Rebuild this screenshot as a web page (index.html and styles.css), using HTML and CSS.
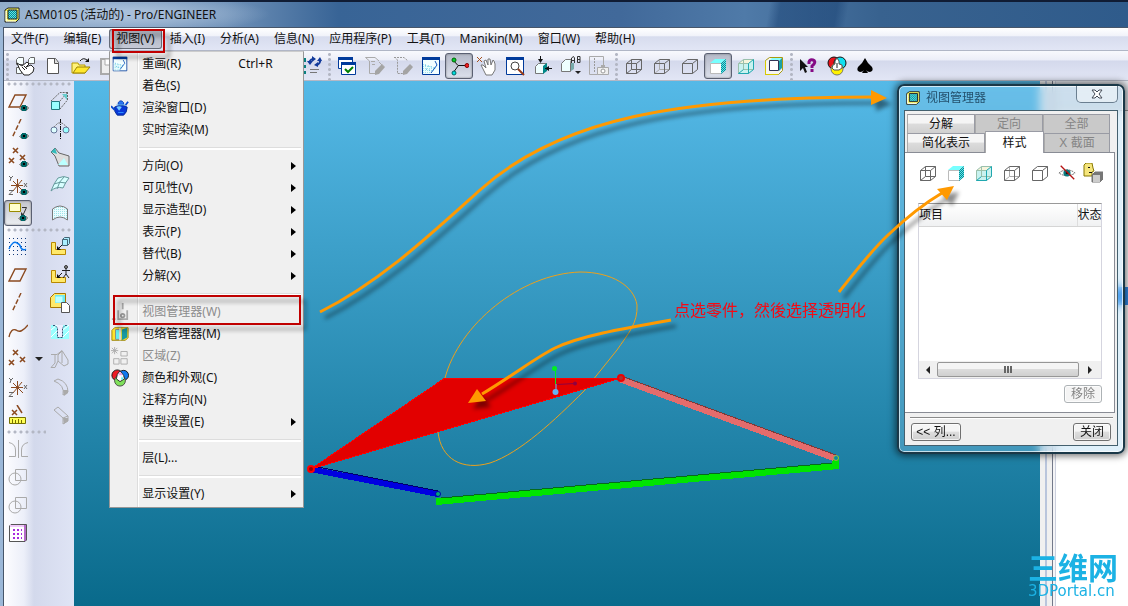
FILE: index.html
```html
<!DOCTYPE html>
<html lang="zh-CN">
<head>
<meta charset="utf-8">
<title>ASM0105 (活动的) - Pro/ENGINEER</title>
<link rel="stylesheet" href="styles.css">
</head>
<body>
<svg class="defs" aria-hidden="true">
  <defs>
    <pattern id="dither" width="2" height="2" patternUnits="userSpaceOnUse"><rect width="2" height="2" fill="#5fe6ea"/><rect width="1" height="1" fill="#0a8a94"/><rect x="1" y="1" width="1" height="1" fill="#0a8a94"/></pattern>
    <pattern id="gold" width="2" height="2" patternUnits="userSpaceOnUse"><rect width="2" height="2" fill="#ff4"/><rect width="1" height="1" fill="#fff8c0"/></pattern>
    <pattern id="pale" width="2" height="2" patternUnits="userSpaceOnUse"><rect width="2" height="2" fill="#eafcff"/><rect width="1" height="1" fill="#9fe4e8"/></pattern>
  </defs>
  <symbol id="app" viewBox="0 0 20 20"><path d="M3 5L6 3H17V14L14 17H3Z" fill="url(#gold)" stroke="#222"/><path d="M6 5H15V14H6Z" fill="url(#dither)" stroke="#222"/><path d="M4 6V16H14" stroke="#fff" fill="none"/></symbol>
  <symbol id="eye" viewBox="0 0 10 8"><path d="M0 4L2 2H8L10 4L8 7H2Z" fill="#999"/><circle cx="5" cy="4" r="3" fill="#066"/><rect x="4" y="3" width="2" height="2" fill="#000"/></symbol>
  <symbol id="models" viewBox="0 0 20 20"><path d="M1.500 3.500L3.500 1.500H8.500V8.500H1.500ZM13.500 3.500L15.500 1.500H19.500V7.500H13.500ZM1.500 11.500H6.500V17.500H1.500Z" fill="#f6ffff" stroke="#666"/><path d="M2 7L7 10L12 6L14 8L11 11L16 9L19 12L18 16L14 19H9L5 14Z" fill="#fff" stroke="#222"/><path d="M7 11L10 14M9 10L12 13" stroke="#222"/></symbol>
  <symbol id="new" viewBox="0 0 20 20"><path d="M4.500 2.500H12.500L15.500 6.500V17.500H4.500Z" fill="#fff" stroke="#555"/><path d="M11.500 2.500V7.500H15.500" fill="#ddd" stroke="#555"/></symbol>
  <symbol id="open" viewBox="0 0 20 20"><path d="M1 7H7L8 9H14V17H1Z" fill="#fff27a" stroke="#b89b00"/><path d="M2 17L6 11H19L14 17Z" fill="#ffe82e" stroke="#9b8200"/><path d="M9 5Q12 1 16 4" fill="none" stroke="#111" stroke-width="1"/><path d="M14 6H18V2Z" fill="#111"/></symbol>
  <symbol id="save" viewBox="0 0 20 20"><path d="M2 3H18V18H2Z" fill="#eee" stroke="#aaa" stroke-width="2"/><path d="M6 3H14V9H6Z" fill="#fff" stroke="#aaa"/></symbol>
  <symbol id="regen" viewBox="0 0 20 20"><path d="M1 2H4V6H1ZM1 9H4V12H1ZM1 15H4V18H1Z" fill="#0a8080"/><path d="M8 7Q7 4 11 3M18 3Q19 7 15 9" stroke="#123a9b" fill="none" stroke-width="2"/><path d="M10 0L14 3L10 6ZM16 6L12 9L16 11ZM5 5H11L8 9ZM15 5H20L18 1Z" fill="#123a9b"/><path d="M8 13.500H17M8 16.500H15" stroke="#777"/></symbol>
  <symbol id="windows" viewBox="0 0 20 20"><path d="M1.500 1.500H15.500V12.500H1.500Z" fill="#fff" stroke="#003a9b"/><path d="M1 2.500H16" stroke="#003a9b" stroke-width="3"/><path d="M4.500 6.500H18.500V18.500H4.500Z" fill="#fff" stroke="#003a9b"/><path d="M4 7.500H19" stroke="#003a9b" stroke-width="3"/><path d="M8 13L11 16L16 11" fill="none" stroke="#008000" stroke-width="2"/></symbol>
  <symbol id="pagepen" viewBox="0 0 20 20"><path d="M0.500 1.500H10L14 5M0.500 1.500L4.500 5V17.500H12M6 5.500H10M7 8.500H10" fill="none" stroke="#aaa"/><path d="M10 15L17 8L20 11L14 18L10 19Z" fill="#a4a4a4"/><path d="M14 6L19 11" stroke="#aaa"/></symbol>
  <symbol id="dashpen" viewBox="0 0 20 20"><path d="M1 1.500H11L15 5M1.500 1L4.500 4V17.500H11" fill="none" stroke="#999" stroke-dasharray="2 1"/><path d="M10 15L17 8L20 11L14 18L10 19Z" fill="#a4a4a4"/></symbol>
  <symbol id="repaint" viewBox="0 0 20 20"><path d="M1.500 1.500H18.500V18.500H1.500Z" fill="#f4ffff" stroke="#003a9b"/><path d="M1 2.500H19" stroke="#003a9b" stroke-width="3"/><path d="M2 8L15 12L9 18H2Z" fill="url(#pale)"/><path d="M4 9L14 12M5 13L11 15" stroke="#3ad" stroke-dasharray="1 2"/><path d="M14 5L16 9L10 17" stroke="#1155bb" fill="none"/></symbol>
  <symbol id="spin" viewBox="0 0 20 20"><path d="M4 4L9 9.500H18M9 10L4 17" fill="none" stroke="#111"/><circle cx="5" cy="4" r="2" fill="#0c3" stroke="#060"/><circle cx="18" cy="9.500" r="2" fill="#e22" stroke="#800"/><circle cx="5" cy="17" r="2" fill="#0dd" stroke="#066"/></symbol>
  <symbol id="hand" viewBox="0 0 20 20"><path d="M0 1L5 6M5 1L0 6" stroke="#a5501e"/><path d="M4 9L6 9L9 12L7 5L9 4L11 9V3H13L14 9L16 4L17 5L18 8V14L15 19H9L6 13Z" fill="#fff" stroke="#777"/></symbol>
  <symbol id="zoomin" viewBox="0 0 20 20"><path d="M1.500 1.500H18.500V18.500H1.500Z" fill="#fff" stroke="#003a9b"/><path d="M1 2.500H19" stroke="#003a9b" stroke-width="3"/><circle cx="10" cy="10" r="4" fill="#fff" stroke="#444"/><path d="M13 13L19 19" stroke="#953a1a" stroke-width="2"/></symbol>
  <symbol id="refit" viewBox="0 0 20 20"><path d="M2.500 10.500L5.500 7.500H13.500L10.500 10.500V17.500H2.500Z" fill="#eff" stroke="#777"/><path d="M10 10L14 7V15L10 18Z" fill="#088"/><path d="M7.500 0V6M12 12.500H19" stroke="#111"/><path d="M5 3H10L7.500 7ZM16 10V15L12 12.500Z" fill="#111"/></symbol>
  <symbol id="named" viewBox="0 0 20 20"><path d="M0.500 7.500L4.500 3.500H10.500L9.500 6.500V15.500H0.500Z" fill="#eff" stroke="#777"/><path d="M10 7L13 7V13L10 15Z" fill="#7aa"/><path d="M10.500 7V2L12.500 0.500L13.500 2V7M11 4.500H14M16.500 0.500H19V6.500H16.500ZM16 3.500H19" stroke="#333" fill="none"/><path d="M14 15H20L17 18Z" fill="#222"/></symbol>
  <symbol id="camera" viewBox="0 0 20 20"><path d="M0.500 0.500H14.500V18.500H0.500Z" fill="none" stroke="#aaa"/><path d="M5.500 2V16" stroke="#999" stroke-dasharray="2 1"/><path d="M8.500 11.500H19.500V18.500H8.500Z" fill="#eee" stroke="#aaa"/><circle cx="14" cy="15" r="2" fill="#fff" stroke="#999"/><path d="M12 10H16" stroke="#aaa" stroke-width="2"/></symbol>
  <symbol id="wire" viewBox="0 0 20 20"><path d="M2.500 7.500H12.500V17.500H2.500ZM7.500 3.500H17.500V13.500H7.500ZM2.500 7.500L7.500 3.500M12.500 7.500L17.500 3.500M12.500 17.500L17.500 13.500M2.500 17.500L7.500 13.500" fill="none" stroke="#666"/></symbol>
  <symbol id="hidden" viewBox="0 0 20 20"><path d="M7.500 3.500V13.500H17.500M2.500 17.500L7.500 13.500" fill="none" stroke="#aaa"/><path d="M2.500 7.500H12.500V17.500H2.500ZM2.500 7.500L7.500 3.500H17.500V13.500L12.500 17.500M12.500 7.500L17.500 3.500" fill="none" stroke="#666"/></symbol>
  <symbol id="nohidden" viewBox="0 0 20 20"><path d="M2.500 7.500H12.500V17.500H2.500ZM2.500 7.500L7.500 3.500H17.500V13.500L12.500 17.500M12.500 7.500L17.500 3.500" fill="none" stroke="#666"/></symbol>
  <symbol id="shade" viewBox="0 0 20 20"><path d="M2.500 7.500H13.500V17.500H2.500Z" fill="#fff" stroke="#bbb"/><path d="M2 7L7 3H18L13 7Z" fill="#7ff"/><path d="M13 7L18 3V14L13 18Z" fill="url(#dither)"/></symbol>
  <symbol id="glass" viewBox="0 0 20 20"><path d="M2.500 7.500L7.500 3.500H17.500V13.500L12.500 17.500H2.500Z" fill="#c8f2f0"/><path d="M2.500 7.500L7.500 3.500H17.500L12.500 7.500Z" fill="#f6f4dc"/><path d="M2.500 7.500H12.500V17.500H2.500ZM2.500 7.500L7.500 3.500H17.500M7.500 3.500V13.500H17.500" fill="none" stroke="#9ac0ac"/><path d="M2.500 17.500H12.500V7.500L17.500 3.500V13.500L12.500 17.500M2.500 17.500L7.500 13.500" fill="none" stroke="#20a8b0"/></symbol>
  <symbol id="enhanced" viewBox="0 0 20 20"><path d="M1.500 4.500L5.500 1.500H18.500V14.500L14.500 18.500H1.500Z" fill="#f4f4f0" stroke="#a89a10"/><path d="M1.500 5V18.500H14" fill="none" stroke="#d8ca00"/><path d="M5 5L8 2H18L15 5Z" fill="#8ff"/><path d="M15 5L18 2V12L15 15Z" fill="#1aa0a6"/><path d="M5.500 4.500H14.500V14.500H5.500Z" fill="#fff" stroke="#335"/></symbol>
  <symbol id="help" viewBox="0 0 20 20"><path d="M1 3V15L4 12L6 17L8 16L6 11H9Z" fill="#111"/><path d="M10 8V6Q11 3 14 4Q17 5 15 8L13 10V12M13 13V16" fill="none" stroke="#850a85" stroke-width="3"/></symbol>
  <symbol id="rgb" viewBox="0 0 20 20"><circle cx="7" cy="7" r="6" fill="#e8121c" stroke="#111"/><circle cx="13" cy="7" r="6" fill="#0fe0f0" stroke="#111"/><circle cx="10" cy="13" r="6" fill="#fff200" stroke="#776"/><path d="M10 2L12 5V8L15 9V12L12 14H7L5 12L6 9L8 8V5Z" fill="#fff" stroke="#555"/><path d="M10 7V12" stroke="#222"/></symbol>
  <symbol id="color" viewBox="0 0 20 20"><circle cx="7" cy="7" r="6" fill="#ee1c24" stroke="#111"/><circle cx="14" cy="7" r="5.500" fill="#1178ee" stroke="#111"/><circle cx="10" cy="13" r="6" fill="#7fe05a" stroke="#444"/><path d="M10 2L14 7L15 11L10 14L6 11L7 6Z" fill="#fff" stroke="#222"/><path d="M10 3L13 7H8Z" fill="#f6a0e8"/><path d="M12 8L14 11L11 12Z" fill="#5ee"/></symbol>
  <symbol id="spade" viewBox="0 0 20 20"><path d="M10 2L13 7L17 11Q19 15 15 16Q12 16 11 14L13 17H7L9 14Q8 16 5 16Q1 15 3 11L7 7Z" fill="#000"/></symbol>
  <symbol id="plane" viewBox="0 0 20 20"><path d="M7 4H18L12 16H1Z" fill="none" stroke="#8b4a20" stroke-width="1.400"/></symbol>
  <symbol id="axis" viewBox="0 0 20 20"><path d="M13 0L4 19" stroke="#8b4a20" stroke-width="1.400" stroke-dasharray="5 2"/></symbol>
  <symbol id="points" viewBox="0 0 20 20"><path d="M5 1L10 6M10 1L5 6M1 11L6 16M6 11L1 16M12 8L17 13M17 8L12 13" stroke="#8b4a20" stroke-width="1.600"/></symbol>
  <symbol id="csys" viewBox="0 0 20 20"><path d="M9.500 4V18M3 10.500H15M5 6L15 16M14 5L5 16" stroke="#8b4a20"/><path d="M1 1L3 3L5 1M3 3L2 6M1 15.500H5L1 19.500H5M16 8L19 12M19 8L16 12" fill="none" stroke="#666"/></symbol>
  <symbol id="note" viewBox="0 0 20 20"><path d="M1.500 0.500H12.500V8.500H1.500Z" fill="#ffc" stroke="#998a00"/><path d="M14 4.500H18.500L15 12" fill="none" stroke="#333"/><path d="M13 9V13H17Z" fill="#333"/></symbol>
  <symbol id="sketch" viewBox="0 0 20 20"><path d="M1 1.500H19M1 5.500H19M1 9.500H19M1 13.500H19M1 17.500H19" stroke="#123a7b" stroke-dasharray="1 3"/><path d="M1 12Q5 3 9 6Q12 7 13 11Q15 14 18 12" fill="none" stroke="#0878f0" stroke-width="1.500"/></symbol>
  <symbol id="curve" viewBox="0 0 20 20"><path d="M1 16Q3 7 8 9Q13 13 20 4" fill="none" stroke="#8b4a20" stroke-width="1.400"/></symbol>
  <symbol id="ruler" viewBox="0 0 20 20"><path d="M4 5L9 10M9 5L4 10M9 0L14 8" stroke="#8b4a20" stroke-width="1.500"/><path d="M1.500 12.500H17.500V18.500H1.500Z" fill="#ff5" stroke="#777200"/><path d="M4.500 14V18M7.500 15V18M10.500 14V18M13.500 15V18" stroke="#777200"/></symbol>
  <symbol id="mirror" viewBox="0 0 20 20"><path d="M10.500 1V19M1 3.500Q7.500 5 7.500 11V17.500H1M20 3.500Q13.500 5 13.500 11V17.500H20" fill="none" stroke="#aaa"/></symbol>
  <symbol id="merge" viewBox="0 0 20 20"><circle cx="7" cy="12" r="6" fill="none" stroke="#aaa"/><path d="M7.500 2.500H18.500V13.500H7.500Z" fill="none" stroke="#aaa"/></symbol>
  <symbol id="grid" viewBox="0 0 20 20"><path d="M1.500 3L3 1.500H18.500V17L17 18.500H1.500Z" fill="#b56bc8" stroke="#555"/><path d="M2 4H16V18H2Z" fill="#fff"/><path d="M2 2H16V4H2Z" fill="#f0c8fa"/><path d="M5 7H14M5 11H14M5 15H14" stroke="#a82ae0" stroke-width="2" stroke-dasharray="2 2"/></symbol>
  <symbol id="extrude" viewBox="0 0 20 20"><path d="M1.500 10.500H9.500V18.500H1.500Z" fill="#9ff" stroke="#237a80"/><path d="M1 10L10 1.500H17.500L10 10M17.500 1V9L10 18" fill="none" stroke="#666" stroke-dasharray="2 1"/><path d="M12 3H17V9Z" fill="#6cc"/></symbol>
  <symbol id="revolve" viewBox="0 0 20 20"><circle cx="4" cy="11" r="3" fill="#dff" stroke="#679"/><circle cx="16" cy="11" r="3" fill="#9ff" stroke="#679"/><path d="M10.500 0V20" stroke="#111" stroke-dasharray="4 1 1 1"/><path d="M4 8L8 4H12L17 8" fill="none" stroke="#777" stroke-dasharray="2 1"/></symbol>
  <symbol id="sweep" viewBox="0 0 20 20"><path d="M1 5L5 1L9 6L19 9V19H9L5 9Z" fill="#ddd" stroke="#666"/><path d="M8 18L14 11L18 18Z" fill="#bff"/><path d="M1 5L5 1L7 7Z" fill="#3bb"/></symbol>
  <symbol id="boundary" viewBox="0 0 20 20"><path d="M1 16Q4 8 8 3Q14 0 19 3Q15 8 13 13Q6 11 1 16Z" fill="#d8ffff" stroke="#66999c"/><path d="M4 9Q10 6 16 8M7 14Q9 6 14 2" fill="none" stroke="#66999c"/></symbol>
  <symbol id="style" viewBox="0 0 20 20"><path d="M2.500 6Q10 0 17.500 6V17Q10 11 2.500 17Z" fill="url(#pale)" stroke="#777"/></symbol>
  <symbol id="assemble" viewBox="0 0 20 20"><path d="M1.500 5.500H5.500V12.500H15.500V17.500H1.500Z" fill="#ffe96a" stroke="#b88800"/><path d="M12.500 2.500H17.500V8.500H12.500ZM12.500 2.500L14.500 0.500H19.500V6.500L17.500 8.500" fill="#aef" stroke="#467"/><path d="M12 8L8 12" stroke="#111"/><path d="M7 9V13H11Z" fill="#111"/></symbol>
  <symbol id="manikin" viewBox="0 0 20 20"><path d="M1.500 5.500H5.500V12.500H15.500V17.500H1.500Z" fill="#ffe96a" stroke="#b88800"/><circle cx="16" cy="2" r="1.500" fill="#888" stroke="#333"/><path d="M12 5.500H20M16 3V9L13 13M16 9L19 13M12 8L8 12" stroke="#222" fill="none"/><path d="M7 9V13H11Z" fill="#111"/></symbol>
  <symbol id="create" viewBox="0 0 20 20"><path d="M0.500 4.500L4.500 0.500H15.500V14.500H0.500Z" fill="#ffe96a" stroke="#a87800"/><path d="M5 2H15V10H5Z" fill="#6ee8f0"/><path d="M5.500 3.500H12.500V9.500H5.500Z" fill="#bff"/><path d="M11.500 9.500H16.500L19.500 12.500V19.500H11.500Z" fill="#fff" stroke="#555"/></symbol>
  <symbol id="holes" viewBox="0 0 20 20"><path d="M1 4H19V18H1Z" fill="#9ff"/><path d="M1 9L7 4M1 16L7 10M13 9L19 4M13 16L19 10" stroke="#fff"/><path d="M7 4H13V16H7Z" fill="#eef"/><path d="M3 4.500H5L7.500 7V16.500H12.500V7L15 4.500H17" fill="none" stroke="#357" stroke-dasharray="2 1"/></symbol>
  <symbol id="draft" viewBox="0 0 20 20"><path d="M1 5.500H7L12 1.500L18 11V15L14 17L8 12L5 18.500H1L5 14V6M8 12V6L12 2V14" fill="none" stroke="#aaa"/></symbol>
  <symbol id="round" viewBox="0 0 20 20"><path d="M4 4L8 2Q18 5 18 15L13 18Q15 8 4 4Z" fill="none" stroke="#aaa"/><path d="M13 13H18V16L14 19Z" fill="#aaa"/></symbol>
  <symbol id="chamfer" viewBox="0 0 20 20"><path d="M4 5L8 2L18 11V16L13 19V13L4 5M13 13L18 11" fill="none" stroke="#aaa"/><path d="M13 13H18V16L14 19Z" fill="#aaa"/></symbol>
  <symbol id="teapot" viewBox="0 0 20 20"><path d="M4 9Q11 5 18 9Q18 15 14 18H7Q3 14 4 9Z" fill="#0838d8" stroke="#022a90"/><path d="M6 9Q9 7 12 9L9 13Z" fill="#7cf"/><path d="M8 4Q11 0 14 4V6H8Z" fill="#2a78f4" stroke="#0438b0"/><path d="M16 7L19 3M4 12L0 8" fill="none" stroke="#0848d0" stroke-width="2"/><path d="M6 6.500H16" stroke="#6bf"/><path d="M8 15H14" stroke="#39f"/></symbol>
  <symbol id="viewmgr" viewBox="0 0 20 20"><path d="M13 0V7M1 18H5M8 8V18H18V8" fill="none" stroke="#aaa" stroke-width="2"/><circle cx="13" cy="14" r="2" fill="none" stroke="#999" stroke-width="2"/></symbol>
  <symbol id="envelope" viewBox="0 0 20 20"><path d="M1 6L4 3H19V14L16 17H1Z" fill="#ffe32e" stroke="#9a8200"/><path d="M5 5H10V16H5Z" fill="#6ee" stroke="#888"/><path d="M12 5L18 3V14L12 17Z" fill="#189aa2"/><path d="M10 3V17" stroke="#ddd" stroke-width="2"/></symbol>
  <symbol id="zone" viewBox="0 0 20 20"><path d="M11 5H18V10H11ZM3 13H9V19H3ZM11 13H18V19H11ZM0 4H8M4 0V8M1 1L7 7M7 1L1 7" fill="none" stroke="#aaa"/></symbol>
  <symbol id="hide" viewBox="0 0 20 20"><path d="M1 10Q10 3 19 10Q10 16 1 10Z" fill="#fff" stroke="#555" stroke-dasharray="2 1"/><circle cx="10" cy="10" r="4" fill="#087a80"/><circle cx="10" cy="10" r="1.500" fill="#111"/><path d="M3 2L18 17" stroke="#b51212" stroke-width="1.500"/></symbol>
  <symbol id="face" viewBox="0 0 20 20"><path d="M1 2L3 0H9L10 5L11 8L9 9V13H1Z" fill="#f5e57c" stroke="#877700"/><path d="M5 4.500H7M6 9.500H9" stroke="#111"/><path d="M9 12L12 9H20V16L17 19H9Z" fill="#777" stroke="#777"/><path d="M10 12H17V19H10Z" fill="#ccc"/></symbol>
</svg>

<div class="app">
  <header class="titlebar"><svg class="icon"><use href="#app"/></svg><h1>ASM0105 (活动的) - Pro/ENGINEER</h1></header>
  <div class="frame">
    <nav class="menubar" aria-label="主菜单">
      <button>文件(F)</button><button>编辑(E)</button>
      <div class="menu-host"><button class="open" aria-expanded="true">视图(V)</button>
        <ul class="dropdown">
          <li><button><svg class="icon small"><use href="#repaint"/></svg><span>重画(R)</span><kbd>Ctrl+R</kbd></button></li>
          <li><button><span>着色(S)</span></button></li>
          <li><button><svg class="icon"><use href="#teapot"/></svg><span>渲染窗口(D)</span></button></li>
          <li><button><span>实时渲染(M)</span></button></li>
          <li class="rule"></li>
          <li><button class="more"><span>方向(O)</span></button></li>
          <li><button class="more"><span>可见性(V)</span></button></li>
          <li><button class="more"><span>显示造型(D)</span></button></li>
          <li><button class="more"><span>表示(P)</span></button></li>
          <li><button class="more"><span>替代(B)</span></button></li>
          <li><button class="more"><span>分解(X)</span></button></li>
          <li class="rule"></li>
          <li><button disabled><svg class="icon"><use href="#viewmgr"/></svg><span>视图管理器(W)</span></button></li>
          <li><button><svg class="icon"><use href="#envelope"/></svg><span>包络管理器(M)</span></button></li>
          <li><button disabled><svg class="icon"><use href="#zone"/></svg><span>区域(Z)</span></button></li>
          <li><button><svg class="icon"><use href="#color"/></svg><span>颜色和外观(C)</span></button></li>
          <li><button><span>注释方向(N)</span></button></li>
          <li><button class="more"><span>模型设置(E)</span></button></li>
          <li class="rule"></li>
          <li><button><span>层(L)...</span></button></li>
          <li class="rule"></li>
          <li><button class="more"><span>显示设置(Y)</span></button></li>
        </ul>
      </div>
      <button>插入(I)</button><button>分析(A)</button><button>信息(N)</button><button>应用程序(P)</button><button>工具(T)</button><button>Manikin(M)</button><button>窗口(W)</button><button>帮助(H)</button>
    </nav>
    <div class="toolbar">
      <i class="grip"></i>
      <button class="tool" aria-label="模型"><svg class="icon"><use href="#models"/></svg></button>
      <button class="tool" aria-label="新建"><svg class="icon"><use href="#new"/></svg></button>
      <button class="tool" aria-label="打开"><svg class="icon"><use href="#open"/></svg></button>
      <button class="tool" aria-label="保存"><svg class="icon"><use href="#save"/></svg></button>
      <i class="grip"></i>
      <div class="covered"></div>
      <button class="tool" aria-label="再生"><svg class="icon"><use href="#regen"/></svg></button>
      <i class="grip"></i>
      <button class="tool" aria-label="窗口"><svg class="icon"><use href="#windows"/></svg></button>
      <button class="tool" aria-label="编辑页"><svg class="icon"><use href="#pagepen"/></svg></button>
      <button class="tool" aria-label="编辑区"><svg class="icon"><use href="#dashpen"/></svg></button>
      <button class="tool" aria-label="重画"><svg class="icon"><use href="#repaint"/></svg></button>
      <button class="tool pressed" aria-label="旋转中心"><svg class="icon"><use href="#spin"/></svg></button>
      <button class="tool" aria-label="平移"><svg class="icon"><use href="#hand"/></svg></button>
      <button class="tool" aria-label="缩放"><svg class="icon"><use href="#zoomin"/></svg></button>
      <button class="tool" aria-label="重新调整"><svg class="icon"><use href="#refit"/></svg></button>
      <button class="tool" aria-label="命名视图"><svg class="icon"><use href="#named"/></svg></button>
      <button class="tool" aria-label="视图管理"><svg class="icon"><use href="#camera"/></svg></button>
      <i class="grip"></i>
      <button class="tool" aria-label="线框"><svg class="icon"><use href="#wire"/></svg></button>
      <button class="tool" aria-label="隐藏线"><svg class="icon"><use href="#hidden"/></svg></button>
      <button class="tool" aria-label="无隐藏线"><svg class="icon"><use href="#nohidden"/></svg></button>
      <button class="tool pressed" aria-label="着色"><svg class="icon"><use href="#shade"/></svg></button>
      <button class="tool" aria-label="透明"><svg class="icon"><use href="#glass"/></svg></button>
      <button class="tool" aria-label="增强"><svg class="icon"><use href="#enhanced"/></svg></button>
      <i class="grip"></i>
      <button class="tool" aria-label="帮助"><svg class="icon"><use href="#help"/></svg></button>
      <button class="tool" aria-label="颜色"><svg class="icon"><use href="#rgb"/></svg></button>
      <button class="tool" aria-label="黑桃"><svg class="icon"><use href="#spade"/></svg></button>
    </div>
    <div class="work">
      <aside class="palette">
        <i class="grip-row"></i>
        <div class="pair"><button class="tool" aria-label="显示平面"><svg class="icon"><use href="#plane"/></svg><svg class="eye"><use href="#eye"/></svg></button><button class="tool" aria-label="拉伸"><svg class="icon"><use href="#extrude"/></svg></button></div>
        <div class="pair"><button class="tool" aria-label="显示轴"><svg class="icon"><use href="#axis"/></svg><svg class="eye"><use href="#eye"/></svg></button><button class="tool" aria-label="旋转"><svg class="icon"><use href="#revolve"/></svg></button></div>
        <div class="pair"><button class="tool" aria-label="显示点"><svg class="icon"><use href="#points"/></svg><svg class="eye"><use href="#eye"/></svg></button><button class="tool" aria-label="扫描"><svg class="icon"><use href="#sweep"/></svg></button></div>
        <div class="pair"><button class="tool" aria-label="显示坐标系"><svg class="icon"><use href="#csys"/></svg><svg class="eye"><use href="#eye"/></svg></button><button class="tool" aria-label="边界混合"><svg class="icon"><use href="#boundary"/></svg></button></div>
        <div class="pair"><button class="tool pressed" aria-label="显示注释"><svg class="icon"><use href="#note"/></svg><svg class="eye"><use href="#eye"/></svg></button><button class="tool" aria-label="造型"><svg class="icon"><use href="#style"/></svg></button></div>
        <i class="grip-row"></i>
        <div class="pair"><button class="tool" aria-label="草绘"><svg class="icon"><use href="#sketch"/></svg></button><button class="tool" aria-label="装配"><svg class="icon"><use href="#assemble"/></svg></button></div>
        <div class="pair"><button class="tool" aria-label="平面"><svg class="icon"><use href="#plane"/></svg></button><button class="tool" aria-label="人体"><svg class="icon"><use href="#manikin"/></svg></button></div>
        <div class="pair"><button class="tool" aria-label="轴"><svg class="icon"><use href="#axis"/></svg></button><button class="tool" aria-label="创建"><svg class="icon"><use href="#create"/></svg></button></div>
        <div class="pair"><button class="tool" aria-label="曲线"><svg class="icon"><use href="#curve"/></svg></button><button class="tool" aria-label="孔"><svg class="icon"><use href="#holes"/></svg></button></div>
        <div class="pair fly"><button class="tool" aria-label="点"><svg class="icon"><use href="#points"/></svg></button><button class="tool" aria-label="拔模"><svg class="icon"><use href="#draft"/></svg></button></div>
        <div class="pair"><button class="tool" aria-label="坐标系"><svg class="icon"><use href="#csys"/></svg></button><button class="tool" aria-label="倒圆角"><svg class="icon"><use href="#round"/></svg></button></div>
        <div class="pair"><button class="tool" aria-label="分析"><svg class="icon"><use href="#ruler"/></svg></button><button class="tool" aria-label="倒角"><svg class="icon"><use href="#chamfer"/></svg></button></div>
        <i class="grip-row short"></i>
        <div class="pair"><button class="tool" aria-label="镜像"><svg class="icon"><use href="#mirror"/></svg></button></div>
        <div class="pair"><button class="tool" aria-label="合并"><svg class="icon"><use href="#merge"/></svg></button></div>
        <div class="pair"><button class="tool" aria-label="修剪"><svg class="icon"><use href="#merge"/></svg></button></div>
        <div class="pair"><button class="tool" aria-label="阵列"><svg class="icon"><use href="#grid"/></svg></button></div>
      </aside>
      <main class="viewport">
        <svg class="model" width="966" height="525" viewBox="74 81 966 525">
          <path d="M438 432C441 459 462 471 490 463C520 453 555 420 584 391L617 350C628 334 638 323 637 305C634 286 612 272 580 272C520 274 459 325 445 378" fill="none" stroke="#eca11c"/>
          <g shape-rendering="crispEdges">
            <path d="M436 498L440 498L832 463L833 456H839V469L436 505Z" fill="#00e400"/>
            <path d="M441 498L832 463" stroke="#056b1c"/>
            <path d="M622 377L836 455L833 461L619 382Z" fill="#e46c6c"/>
            <path d="M624 377L836 455" stroke="#7a3a3a"/>
            <path d="M314 467L438 491V497L310 472Z" fill="#0000e0"/>
            <path d="M318 467L438 491" stroke="#00006a"/>
            <path d="M311 469L445 378H621Z" fill="#e20000" stroke="#f00"/>
          </g>
          <circle cx="311" cy="469" r="3" fill="#900" stroke="#f00" stroke-width="2"/>
          <circle cx="621" cy="378" r="3" fill="#a33" stroke="#e00" stroke-width="2"/>
          <circle cx="438" cy="494" r="2.500" fill="#0a7" stroke="#00a"/>
          <circle cx="836" cy="458" r="2.500" fill="#0a8aa0" stroke="#a8b040"/>
          <path d="M555.500 368V384" stroke="#00ee20"/><path d="M556 384V392" stroke="#6bf"/><path d="M557 384.500L575 383.500" stroke="#900040"/>
          <circle cx="554.500" cy="368.500" r="2.500" fill="#00f020"/><circle cx="555.500" cy="392" r="3" fill="#66b4f4"/><circle cx="575" cy="383.500" r="2" fill="#900040"/>
        </svg>
      </main>
      <aside class="tree" aria-label="模型树"><div class="tree-body"><div class="tree-head"></div><div class="tree-selected"></div></div></aside>
    </div>
  </div>

  <section class="dialog" role="dialog" aria-labelledby="dlg">
    <header><svg class="icon"><use href="#app"/></svg><h2 id="dlg">视图管理器</h2><button class="close" aria-label="关闭窗口"><svg width="12" height="10" viewBox="0 0 12 10"><path d="M1 1H4L6 3L8 1H11L8 5L11 9H8L6 7L4 9H1L4 5Z" fill="#fff" stroke="#444c58"/></svg></button></header>
    <div class="dialog-body">
      <div class="tabs" role="tablist">
        <div class="tab-row"><button role="tab">分解</button><button role="tab" disabled>定向</button><button role="tab" disabled>全部</button></div>
        <div class="tab-row second"><button role="tab">简化表示</button><button role="tab" aria-selected="true" class="active">样式</button><button role="tab" disabled>X 截面</button></div>
      </div>
      <div class="panel" role="tabpanel">
        <div class="style-tools">
          <button class="tool" aria-label="线框"><svg class="icon"><use href="#wire"/></svg></button>
          <button class="tool" aria-label="着色"><svg class="icon"><use href="#shade"/></svg></button>
          <button class="tool" aria-label="透明"><svg class="icon"><use href="#glass"/></svg></button>
          <button class="tool" aria-label="隐藏线"><svg class="icon"><use href="#hidden"/></svg></button>
          <button class="tool" aria-label="无隐藏线"><svg class="icon"><use href="#nohidden"/></svg></button>
          <button class="tool" aria-label="遮蔽"><svg class="icon small"><use href="#hide"/></svg></button>
          <button class="tool" aria-label="外观"><svg class="icon"><use href="#face"/></svg></button>
        </div>
        <div class="list">
          <table><thead><tr><th>项目</th><th class="state">状态</th></tr></thead></table>
          <div class="scroll"><button class="left" aria-label="向左"></button><div class="thumb"><i></i></div><button class="right" aria-label="向右"></button></div>
        </div>
        <button class="push remove" disabled>移除</button>
      </div>
      <hr>
      <footer><button class="push wide">&lt;&lt; 列...</button><button class="push">关闭</button></footer>
    </div>
  </section>

  <svg class="marks" width="1128" height="606" viewBox="0 0 1128 606" aria-hidden="true">
    <g class="boxes" fill="none" stroke="#c00000" stroke-width="2"><rect x="113" y="30" width="51" height="22"/><rect x="114" y="296" width="186" height="28"/></g>
    <g class="arrows" fill="none" stroke="#ff9900" stroke-width="3">
      <path d="M320 312C380 282 430 235 480 190C560 118 680 97 874 97"/>
      <path d="M671 320C620 329 580 336 555 348C535 358 515 374 482 394"/>
      <path d="M839 292C860 266 870 252 888 235C905 219 925 203 942 193"/>
      <g fill="#ff9900" stroke="none"><path d="M871 90L887 98L871 105Z"/><path d="M468 403L477 389L486 401Z"/><path d="M954 186L937 189L947 200Z"/></g>
    </g>
  </svg>
  <p class="callout">点选零件，然後选择透明化</p>
  <div class="watermark"><strong>三维网</strong><span>3DPortal.cn</span></div>
</div>
</body>
</html>
```

FILE: styles.css
```css
* { box-sizing: border-box; }
body { margin: 0; font: 12px/16px "Noto Sans", "Noto Sans CJK SC", sans-serif; color: #111; }
button { margin: 0; padding: 0; border: 0; background: none; color: inherit; font: inherit; white-space: nowrap; }
h1, h2, p, ul { margin: 0; padding: 0; font-weight: 400; }
ul { list-style: none; }
.defs { position: absolute; width: 0; height: 0; }
.icon { display: block; width: 20px; height: 20px; flex: none; }
.icon.small { width: 16px; height: 16px; }
.eye use { shape-rendering: crispEdges; }

.app { position: relative; height: 100vh; display: flex; flex-direction: column; overflow: hidden; background: #9cb8d8; }
.titlebar { height: 27px; flex: none; display: flex; align-items: center; gap: 3px; padding: 0 2px; border-top: 2px solid #101c34;
  background: radial-gradient(ellipse 150px 20px at 120px 12px, #a9c0da 20%, rgba(150, 178, 210, 0) 100%), linear-gradient(100deg, rgba(255,255,255,0) 0 68%, rgba(20,60,110,.45) 69% 74%, rgba(255,255,255,0) 75%), linear-gradient(90deg, #8fabc9 0, #6f91b8 20%, #386496 30%, #41699a 55%, #4f7aa8 66%, #38628f 78%, #2f5b8b 100%); }
.titlebar h1 { font-size: 12px; line-height: 16px; }
.frame { flex: 1; min-height: 0; margin-left: 3px; display: flex; flex-direction: column; border: 1px solid #47566a; border-width: 1px 0 0 1px; }

.menubar { height: 23px; flex: none; display: flex; align-items: center; gap: 1px; border-bottom: 1px solid #b0b6c6; background: linear-gradient(#fff 0, #f1f3fa 35%, #d7dcee 40%, #e2e6f5 100%); }
.menubar > button, .menubar .open { height: 20px; padding: 0 7px; }
.menu-host { position: relative; height: 20px; }
.menubar .open { border-radius: 3px; background: linear-gradient(#a9adb8, #c6cad8); box-shadow: inset 0 0 0 1px #666c78; }
.dropdown { position: absolute; z-index: 3; top: 22px; left: 0; width: 195px; padding: 1px 0 2px; border: 1px solid #979797; border-top-color: #ccc; background: linear-gradient(90deg, #f0f0f0 27px, #ddd 27px 28px, #fff 28px 29px, #f0f0f0 29px); }
.dropdown button { display: grid; grid-template-columns: 20px 96px 1fr; column-gap: 12px; align-items: center; width: 100%; height: 22px; text-align: left; }
.dropdown .icon { width: 18px; height: 18px; justify-self: center; grid-column: 1; grid-row: 1; }
.dropdown .icon.small { width: 16px; height: 16px; }
.dropdown span { grid-column: 2; grid-row: 1; }
.dropdown kbd { font: inherit; grid-column: 3; margin-left: -12px; }
.dropdown button:disabled { color: #8c8c8c; }
.dropdown .more::after { content: ""; justify-self: end; grid-column: 3; margin-right: 7px; border: 4px solid transparent; border-left: 5px solid #000; border-right: 0; }
.rule { height: 14px; margin: 0 2px 0 29px; display: flex; align-items: center; }
.rule::before { content: ""; flex: 1; height: 2px; border-top: 1px solid #ddd; background: #fff; }

.toolbar { height: 30px; flex: none; display: flex; align-items: center; border-bottom: 1px solid #b4b8c6; background: linear-gradient(#f8f9fd 0, #eceef8 30%, #d4d9ec 35%, #e2e6f5 100%); }
.grip { flex: none; width: 7px; height: 28px; background: radial-gradient(circle, #b3b7c4 1px, transparent 2px) 0 0 / 7px 5px; }
.covered { width: 168px; flex: none; }
.tool { position: relative; width: 28px; height: 28px; flex: none; display: grid; place-items: center; }
.pressed { border: 1px solid #5a6072; border-radius: 3px; height: 26px; background: linear-gradient(#b4b9c8, #dce0ec); box-shadow: inset 0 0 2px #777; }

.work { flex: 1; min-height: 0; display: flex; }
.palette { width: 70px; flex: none; display: flex; flex-direction: column; overflow: hidden; background: linear-gradient(90deg, #fdfdff 0, #eceff9 20px, #d3d9ec 30px, #dfe4f5 100%); }
.grip-row { height: 6px; flex: none; margin: 0 2px; background: radial-gradient(circle, #b3b7c4 1px, transparent 2px) 0 0 / 6px 6px; }
.grip-row.short { width: 40px; }
.pair { position: relative; height: 28px; flex: none; display: flex; align-items: center; justify-content: space-between; }
.eye { position: absolute; right: 3px; bottom: 3px; width: 10px; height: 8px; }
.palette .pressed { background: linear-gradient(#c4c6cc, #eceef2); }
.fly::before { content: ""; position: absolute; left: 31px; top: 12px; border: 4px solid transparent; border-top-color: #222; border-bottom: 0; }
.viewport { flex: 1; min-width: 0; overflow: hidden; background: linear-gradient(#55b9e7, #096a8b); }
.model { display: block; }
.tree { width: 88px; flex: none; padding-left: 16px; background: linear-gradient(90deg, #f0f0f0 5px, #b9c5dc 5px 7px, #f0f0f0 7px 12px, #73798a 12px 13px, #f4f4f6 13px 15px, #ccd0de 15px 16px, #fff 16px); }
.tree-body { height: 100%; }
.tree-head { height: 30px; background: #e4e6ec; border-bottom: 1px solid #999; }
.tree-selected { height: 18px; margin-top: 176px; background: #3390f0; }

.dialog { position: absolute; z-index: 4; left: 897px; top: 84px; width: 228px; padding: 0 5px 6px; border: 2px solid #1a3848; border-radius: 7px; background: rgba(150, 205, 238, .3); backdrop-filter: blur(5px); box-shadow: inset 0 0 0 1px rgba(255,255,255,.7), 0 0 7px 2px rgba(0,0,0,.55); font-family: "Liberation Sans", "Noto Sans CJK SC", sans-serif; }
.dialog header { height: 24px; display: flex; align-items: center; gap: 4px; }
.dialog header .icon { width: 18px; height: 18px; }
.dialog h2 { flex: 1; font-size: 12px; color: #24506c; }
.close { align-self: flex-start; width: 42px; height: 17px; display: grid; place-items: center; border: 1px solid #6b7f90; border-top: 0; border-radius: 0 0 5px 5px; background: rgba(255,255,255,.45); }
.dialog-body { display: flex; flex-direction: column; border: 1px solid #44606e; background: #f0f0f0; }
.tabs { padding: 3px 7px 0 2px; background: #f0f0f0; }
.tab-row { display: grid; grid-template-columns: 68px 68px 1fr; }
.tab-row.second { grid-template-columns: 78px 59px 1fr; }
.tab-row button { height: 19px; border: 1px solid #999ba4; border-bottom: 0; border-left-color: #aaa; background: linear-gradient(#f5f5f5 0 45%, #dcdcdc 50%, #d0d0d0); }
.tab-row button:disabled { color: #858585; background: #c9c9c9; }
.tab-row .active { height: 22px; margin: -2px 0 -1px; background: #fff; z-index: 1; }
.panel { height: 261px; margin-right: 2px; padding: 6px 12px 0 13px; border: 1px solid #898c95; border-left: 0; background: #fff; display: flex; flex-direction: column; }
.style-tools { display: flex; margin: 0 -7px 16px -4px; }
.style-tools .tool:nth-child(n+6) { width: 26px; }
.style-tools .icon.small { width: 18px; height: 18px; }
.list { height: 176px; display: flex; flex-direction: column; justify-content: space-between; border: 1px solid #d5d5df; border-top-color: #999; }
table { width: 100%; border-collapse: collapse; table-layout: fixed; }
th { height: 22px; padding: 0; font-weight: 400; text-align: left; border-bottom: 1px solid #d5d5d5; background: linear-gradient(#fff, #f0f1f2); overflow: hidden; white-space: nowrap; }
th.state { width: 24px; border-left: 1px solid #ddd; }
.scroll { height: 17px; display: grid; grid-template-columns: 18px 1fr 22px; align-items: center; background: #f0f0f0; }
.scroll button { display: grid; place-items: center; }
.scroll button::before { content: ""; border: 4px solid transparent; }
.scroll .left::before { border-right-color: #222; border-left: 0; }
.scroll .right::before { border-left-color: #222; border-right: 0; }
.thumb { height: 15px; display: grid; place-items: center; border: 1px solid #979797; border-radius: 2px; background: linear-gradient(#f5f5f5 0 45%, #dcdcdc 50%, #cfcfcf); }
.thumb i { width: 8px; height: 7px; background: repeating-linear-gradient(90deg, #666 0 2px, transparent 2px 3px); }
.push { width: 38px; height: 18px; line-height: 16px; border: 1px solid #707070; border-radius: 3px; background: linear-gradient(#f5f5f5 0 45%, #dedede 50%, #cfcfcf); box-shadow: inset 0 0 0 1px rgba(255,255,255,.7); }
.push.wide { width: 50px; }
.push.remove { align-self: flex-end; margin-top: 6px; }
.push:disabled { color: #838383; border-color: #adb2b5; background: #f4f4f4; }
hr { width: 203px; height: 2px; margin: 4px 5px 0; border: 0; border-top: 1px solid #8a8a8a; background: #fff; }
footer { display: flex; justify-content: space-between; padding: 4px 6px; }

.marks { position: absolute; z-index: 5; left: 0; top: 0; pointer-events: none; }
.arrows { filter: drop-shadow(5px 6px 2px rgba(0,0,0,.45)); }
.boxes { filter: drop-shadow(5px 5px 2px rgba(0,0,0,.4)); }
.callout { position: absolute; z-index: 5; left: 674px; top: 297px; font: 16px/24px "Noto Sans CJK SC", sans-serif; color: #f50a14; }
.watermark { position: absolute; z-index: 5; left: 1028px; top: 550px; display: flex; flex-direction: column; gap: 2px; color: #1cb2e4; }
.watermark strong { font: 700 30px/32px "Noto Sans CJK SC", sans-serif; }
.watermark span { font: 15px/14px "DejaVu Sans", sans-serif; }
```
